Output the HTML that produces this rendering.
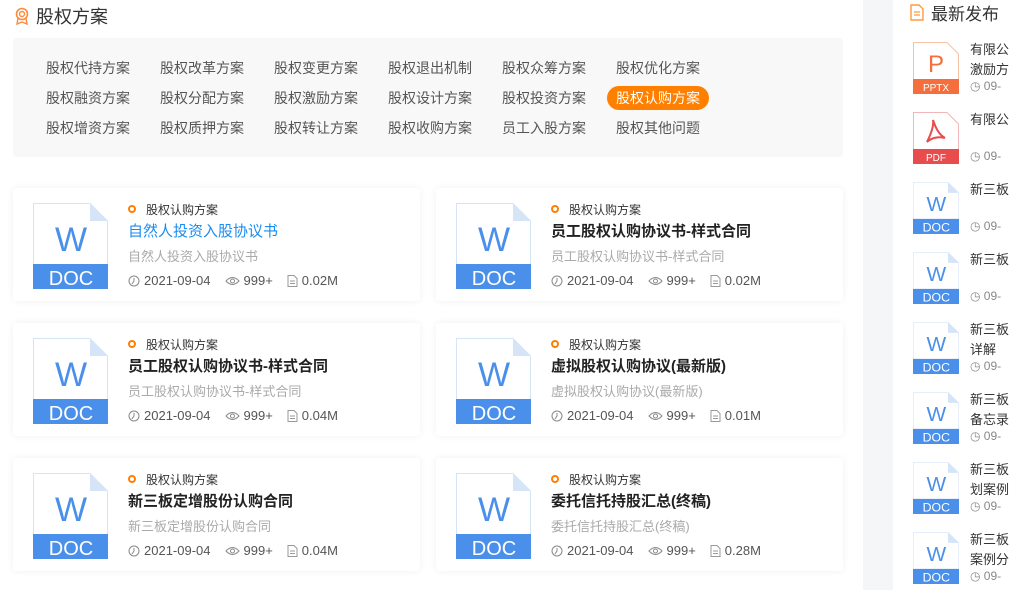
<!DOCTYPE html><html><head><meta charset="utf-8"><style>
*{margin:0;padding:0;box-sizing:border-box}
body{width:1009px;height:590px;overflow:hidden;background:#f5f6f8;font-family:"Liberation Sans","Noto Sans CJK SC",sans-serif;position:relative}
.a{position:absolute}
.main{left:0;top:0;width:863px;height:590px;background:#fff}
.side{left:893px;top:0;width:116px;height:590px;background:#fff}
.tag{position:absolute;font-size:14px;color:#555;line-height:24px;white-space:nowrap}
.on{background:#ff7f00;color:#fff;border-radius:12px;padding:0 9px}
.card{position:absolute;width:407px;height:113px;background:#fff;box-shadow:0 0 8px rgba(0,0,0,.06);border-radius:3px}
.doc{position:absolute;left:20px;top:15px;width:75px;height:86px}
.cat{position:absolute;left:115px;top:13px;font-size:12px;color:#333;padding-left:18px}
.cat:before{content:"";position:absolute;left:0;top:4px;width:8px;height:8px;border:2px solid #ff7f00;border-radius:50%;box-sizing:border-box}
.tt{position:absolute;left:115px;top:32px;font-size:15px;font-weight:bold;color:#222;white-space:nowrap}
.ds{position:absolute;left:115px;top:58px;font-size:13px;color:#aaa;white-space:nowrap}
.mt{position:absolute;left:115px;top:85px;font-size:13px;color:#555;white-space:nowrap;display:flex;align-items:center}
.mt span{margin-right:14px;display:flex;align-items:center}
.mt svg{margin-right:4px}
.si{position:absolute;left:913px;width:46px;height:52px}
.st{position:absolute;left:970px;font-size:13px;color:#333;line-height:20px;white-space:nowrap}
.sd{position:absolute;left:970px;font-size:12px;color:#888}
</style></head><body>
<div class="a main"></div><div class="a side"></div>
<svg class="a" style="left:14px;top:7px" width="16" height="18" viewBox="0 0 16 18"><circle cx="8" cy="7" r="5.5" fill="none" stroke="#ff8a3d" stroke-width="1.6"/><circle cx="8" cy="7" r="2.5" fill="none" stroke="#ff8a3d" stroke-width="1.4"/><path d="M4 11 L3 17 L8 15 L13 17 L12 11" fill="none" stroke="#ff8a3d" stroke-width="1.4"/></svg>
<div class="a" style="left:36px;top:3px;font-size:18px;color:#333">股权方案</div>
<div class="a" style="left:13px;top:38px;width:830px;height:119px;background:#f8f8f8;border-radius:3px"></div>
<div class="tag" style="left:46px;top:56px">股权代持方案</div><div class="tag" style="left:160px;top:56px">股权改革方案</div><div class="tag" style="left:274px;top:56px">股权变更方案</div><div class="tag" style="left:388px;top:56px">股权退出机制</div><div class="tag" style="left:502px;top:56px">股权众筹方案</div><div class="tag" style="left:616px;top:56px">股权优化方案</div>
<div class="tag" style="left:46px;top:86px">股权融资方案</div><div class="tag" style="left:160px;top:86px">股权分配方案</div><div class="tag" style="left:274px;top:86px">股权激励方案</div><div class="tag" style="left:388px;top:86px">股权设计方案</div><div class="tag" style="left:502px;top:86px">股权投资方案</div><div class="tag on" style="left:607px;top:86px">股权认购方案</div>
<div class="tag" style="left:46px;top:116px">股权增资方案</div><div class="tag" style="left:160px;top:116px">股权质押方案</div><div class="tag" style="left:274px;top:116px">股权转让方案</div><div class="tag" style="left:388px;top:116px">股权收购方案</div><div class="tag" style="left:502px;top:116px">员工入股方案</div><div class="tag" style="left:616px;top:116px">股权其他问题</div>
<svg width="0" height="0" style="position:absolute"><defs>
<g id="d"><path d="M0.5 0.5 H57 L74.5 18 V85.5 H0.5Z" fill="#fff" stroke="#d6e4f8"/><path d="M57 0.5 V18 H74.5Z" fill="#d6e4f8"/><rect x="0" y="61" width="75" height="25" fill="#4a90ea"/><text x="38" y="48" font-size="34" fill="#4a90ea" text-anchor="middle" font-family="Liberation Sans">W</text><text x="38" y="82" font-size="20" fill="#fff" text-anchor="middle" font-family="Liberation Sans">DOC</text></g>
</defs></svg>
<div id="cards"></div>
<script>
var ck='<svg width="12" height="12" viewBox="0 0 12 12"><circle cx="6" cy="6" r="5" fill="none" stroke="#888"/><path d="M6 3V6L4 9" fill="none" stroke="#888"/></svg>';
var ey='<svg width="15" height="10" viewBox="0 0 15 10"><path d="M1 5Q7.5 -2 14 5Q7.5 12 1 5Z" fill="none" stroke="#888"/><circle cx="7.5" cy="5" r="2" fill="none" stroke="#888"/></svg>';
var fl='<svg width="11" height="12" viewBox="0 0 11 12"><path d="M1 .5H7L10 3.5V11.5H1Z" fill="none" stroke="#999"/><path d="M3 6H8M3 8.5H8" stroke="#999"/></svg>';
var c=[["自然人投资入股协议书","0.02M",1],["员工股权认购协议书-样式合同","0.02M"],["员工股权认购协议书-样式合同","0.04M"],["虚拟股权认购协议(最新版)","0.01M"],["新三板定增股份认购合同","0.04M"],["委托信托持股汇总(终稿)","0.28M"]];
var h="";c.forEach(function(x,i){var l=i%2?436:13,t=188+Math.floor(i/2)*135;
h+='<div class="card" style="left:'+l+'px;top:'+t+'px"><svg class="doc" viewBox="0 0 75 86"><use href="#d"/></svg><div class="cat">股权认购方案</div><div class="tt" style="'+(x[2]?'color:#1a8cf0;font-weight:normal':'')+'">'+x[0]+'</div><div class="ds">'+x[0]+'</div><div class="mt"><span>'+ck+'2021-09-04</span><span>'+ey+'999+</span><span>'+fl+x[1]+'</span></div></div>';});
document.getElementById("cards").innerHTML=h;
</script>
<svg class="a" style="left:910px;top:4px" width="14" height="17" viewBox="0 0 14 17"><path d="M1 1H9L13 5V16H1Z" fill="#fff" stroke="#ff9a3d" stroke-width="1.4"/><path d="M4 8H10M4 11H10" stroke="#ff9a3d" stroke-width="1.3"/></svg>
<div class="a" style="left:931px;top:0px;font-size:17px;color:#333">最新发布</div>
<svg class="si" style="top:42px" viewBox="0 0 46 52"><path d="M.5 .5H34L45.5 12V51.5H.5Z" fill="#fff" stroke="#f6c2a8"/><rect y="37" width="46" height="15" fill="#f46f3d"/><text x="23" y="30" font-size="24" fill="#f46f3d" text-anchor="middle" font-family="Liberation Sans">P</text><text x="23" y="49" font-size="10" fill="#fff" text-anchor="middle" font-family="Liberation Sans">PPTX</text></svg>
<div class="st" style="top:40px">有限公<br>激励方</div><div class="sd" style="top:79px">◷ 09-</div>
<svg class="si" style="top:112px" viewBox="0 0 46 52"><path d="M.5 .5H34L45.5 12V51.5H.5Z" fill="#fff" stroke="#f2b7b7"/><rect y="37" width="46" height="15" fill="#e84c4c"/><path d="M20 8C22 14 25 22 32 26C26 24 18 26 14 30C18 22 21 14 20 8Z" fill="none" stroke="#e84c4c" stroke-width="2"/><text x="23" y="49" font-size="10" fill="#fff" text-anchor="middle" font-family="Liberation Sans">PDF</text></svg>
<div class="st" style="top:110px">有限公</div><div class="sd" style="top:149px">◷ 09-</div>
<div id="side"></div>
<script>
var s=[["新三板"],["新三板"],["新三板<br>详解"],["新三板<br>备忘录"],["新三板<br>划案例"],["新三板<br>案例分"]],o="";
s.forEach(function(x,i){var t=182+i*70;o+='<svg class="si" style="top:'+t+'px" viewBox="0 0 75 86" preserveAspectRatio="none"><use href="#d"/></svg><div class="st" style="top:'+(t-2)+'px">'+x[0]+'</div><div class="sd" style="top:'+(t+37)+'px">◷ 09-</div>';});
document.getElementById("side").innerHTML=o;
</script>
</body></html>
